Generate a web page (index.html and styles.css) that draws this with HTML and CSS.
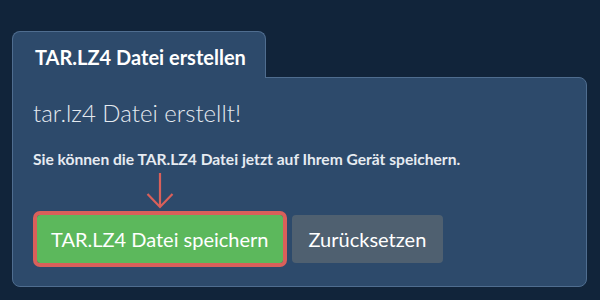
FILE: index.html
```html
<!DOCTYPE html>
<html lang="de">
<head>
    <meta charset="UTF-8">
    <meta name="viewport" content="width=device-width, initial-scale=1.0">
    <title>TAR.LZ4 Datei erstellen</title>
    <link rel="stylesheet" href="styles.css">
</head>
<body>
    <div class="panel">
        <div class="tab">TAR.LZ4 Datei erstellen</div>
        <div class="card">
            <h2>tar.lz4 Datei erstellt!</h2>
            <p class="hint">Sie können die TAR.LZ4 Datei jetzt auf Ihrem Gerät speichern.</p>
            <div class="actions">
                <div class="save-wrap">
                    <svg class="arrow" width="28" height="37" viewBox="0 0 28 37">
                        <path d="M14 1 V35 M1.5 22 L14 35 L26.5 22" fill="none" stroke="#d9605a" stroke-width="2.2"/>
                    </svg>
                    <button class="btn btn-save">TAR.LZ4 Datei speichern</button>
                </div>
                <button class="btn btn-reset">Zurücksetzen</button>
            </div>
        </div>
    </div>
</body>
</html>
```

FILE: styles.css
```css
body {
    margin: 0;
    background-color: #11243a;
    font-family: Lato, 'Open Sans', sans-serif;
    color: #e6ebf1;
}
.panel {
    padding: 30px 13px 0 12px;
}
.tab {
    display: inline-block;
    position: relative;
    top: 1px;
    box-sizing: border-box;
    width: 254px;
    height: 47px;
    padding: 0 22px;
    line-height: 50px;
    font-size: 20px;
    font-weight: 700;
    white-space: nowrap;
    color: #fff;
    background-color: #2d4a6b;
    border: 1px solid #4f6d8f;
    border-bottom: none;
    border-radius: 8px 8px 0 0;
}
.card {
    background-color: #2d4a6b;
    border: 1px solid #4f6d8f;
    border-radius: 0 8px 8px 8px;
    padding: 21px 20px 23px 20px;
}
h2 {
    margin: 0;
    font-size: 24px;
    font-weight: 300;
    line-height: 28px;
    color: #e4e9ef;
}
.hint {
    margin: 22px 0 0 0;
    font-size: 15.6px;
    font-weight: 700;
    line-height: 20px;
    white-space: nowrap;
}
.actions {
    display: flex;
    gap: 9px;
    margin-top: 46px;
}
.save-wrap {
    position: relative;
    margin-left: 4px;
}
.arrow {
    position: absolute;
    left: 50%;
    top: -43px;
    margin-left: -14px;
}
.btn {
    font-family: Lato, 'Open Sans', sans-serif;
    font-size: 20px;
    line-height: 24px;
    padding: 12px 17px;
    border: none;
    border-radius: 4px;
    color: #fff;
    cursor: pointer;
}
.btn-save {
    padding: 12px 14px;
    background-color: #5cb85c;
    outline: 4px solid #d9605a;
    border-radius: 3px;
}
.btn-reset {
    background-color: #4f6070;
}
```
